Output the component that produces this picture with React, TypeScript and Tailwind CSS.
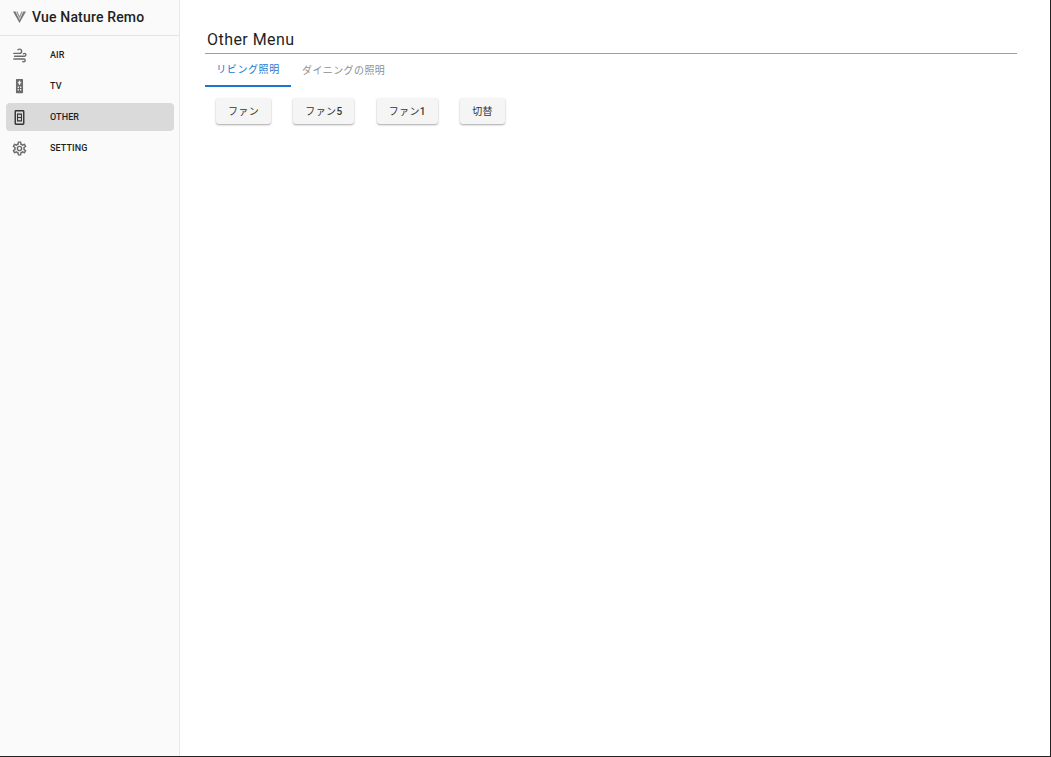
const navItems = [
  { label: "AIR", icon: "air" },
  { label: "TV", icon: "tv" },
  { label: "OTHER", icon: "other", active: true },
  { label: "SETTING", icon: "setting" },
];

const buttons = [
  { label: "ファン", digit: "" },
  { label: "ファン", digit: "5" },
  { label: "ファン", digit: "1" },
  { label: "切替", digit: "" },
];

function NavIcon({ name }: { name: string }) {
  if (name === "air") {
    return (
      <svg viewBox="0 0 24 24" className="h-[17px] w-[17px]" fill="#6b6b6b">
        <path d="M4,10A1,1 0 0,1 3,9A1,1 0 0,1 4,8H12A2,2 0 0,0 14,6A2,2 0 0,0 12,4C11.45,4 10.95,4.22 10.59,4.59C10.2,5 9.56,5 9.17,4.59C8.78,4.2 8.78,3.56 9.17,3.17C9.9,2.45 10.9,2 12,2A4,4 0 0,1 16,6A4,4 0 0,1 12,10H4M19,12A1,1 0 0,0 20,11A1,1 0 0,0 19,10C18.72,10 18.47,10.11 18.29,10.29C17.9,10.68 17.27,10.68 16.88,10.29C16.5,9.9 16.5,9.27 16.88,8.88C17.42,8.34 18.17,8 19,8A3,3 0 0,1 22,11A3,3 0 0,1 19,14H5A1,1 0 0,1 4,13A1,1 0 0,1 5,12H19M18,18H4A1,1 0 0,1 3,17A1,1 0 0,1 4,16H18A3,3 0 0,1 21,19A3,3 0 0,1 18,22C17.17,22 16.42,21.66 15.88,21.12C15.5,20.73 15.5,20.1 15.88,19.71C16.27,19.32 16.9,19.32 17.29,19.71C17.47,19.89 17.72,20 18,20A1,1 0 0,0 19,19A1,1 0 0,0 18,18Z" />
      </svg>
    );
  }
  if (name === "tv") {
    return (
      <svg viewBox="0 0 24 24" className="h-[17px] w-[17px]" fill="#6b6b6b">
        <path
          fillRule="evenodd"
          d="M8,1.5H16A1,1 0 0,1 17,2.5V20.5A1,1 0 0,1 16,21.5H8A1,1 0 0,1 7,20.5V2.5A1,1 0 0,1 8,1.5ZM11,4V6H9.5V7.5H11V9.5H13V7.5H14.5V6H13V4ZM9.5,12V14H11.2V12ZM12.8,12V14H14.5V12ZM9.5,15.5V17.5H11.2V15.5ZM12.8,15.5V17.5H14.5V15.5Z"
        />
      </svg>
    );
  }
  if (name === "other") {
    return (
      <svg viewBox="0 0 24 24" className="h-[17px] w-[17px]" fill="#333333">
        <path
          fillRule="evenodd"
          d="M7,1.5H17A2,2 0 0,1 19,3.5V20.5A2,2 0 0,1 17,22.5H7A2,2 0 0,1 5,20.5V3.5A2,2 0 0,1 7,1.5ZM7,3.5V20.5H17V3.5ZM8.5,6.5H15.5V17.5H8.5ZM10,8V11.2H14V8ZM10,12.8V16H14V12.8Z"
        />
      </svg>
    );
  }
  return (
    <svg viewBox="0 0 24 24" className="h-[17px] w-[17px]" fill="#6b6b6b">
      <path d="M12,8A4,4 0 0,1 16,12A4,4 0 0,1 12,16A4,4 0 0,1 8,12A4,4 0 0,1 12,8M12,10A2,2 0 0,0 10,12A2,2 0 0,0 12,14A2,2 0 0,0 14,12A2,2 0 0,0 12,10M10,22C9.75,22 9.54,21.82 9.5,21.58L9.13,18.93C8.5,18.68 7.96,18.34 7.44,17.94L4.95,18.95C4.73,19.03 4.46,18.95 4.34,18.73L2.34,15.27C2.21,15.05 2.27,14.78 2.46,14.63L4.57,12.97L4.5,12L4.57,11L2.46,9.37C2.27,9.22 2.21,8.95 2.34,8.73L4.34,5.27C4.46,5.05 4.73,4.96 4.95,5.05L7.44,6.05C7.96,5.66 8.5,5.32 9.13,5.07L9.5,2.42C9.54,2.18 9.75,2 10,2H14C14.25,2 14.46,2.18 14.5,2.42L14.87,5.07C15.5,5.32 16.04,5.66 16.56,6.05L19.05,5.05C19.27,4.96 19.54,5.05 19.66,5.27L21.66,8.73C21.79,8.95 21.73,9.22 21.54,9.37L19.43,11L19.5,12L19.43,13L21.54,14.63C21.73,14.78 21.79,15.05 21.66,15.27L19.66,18.73C19.54,18.95 19.27,19.04 19.05,18.95L16.56,17.95C16.04,18.34 15.5,18.68 14.87,18.93L14.5,21.58C14.46,21.82 14.25,22 14,22H10M11.25,4L10.88,6.61C9.68,6.86 8.62,7.5 7.85,8.39L5.44,7.35L4.69,8.65L6.8,10.2C6.4,11.37 6.4,12.64 6.8,13.8L4.68,15.36L5.43,16.66L7.86,15.62C8.63,16.5 9.68,17.14 10.87,17.38L11.24,20H12.76L13.13,17.39C14.32,17.14 15.37,16.5 16.14,15.62L18.57,16.66L19.32,15.36L17.2,13.81C17.6,12.64 17.6,11.37 17.2,10.2L19.31,8.65L18.56,7.35L16.15,8.39C15.38,7.5 14.32,6.86 13.12,6.62L12.75,4H11.25Z" />
    </svg>
  );
}

export default function App() {
  return (
    <div className="box-border flex h-screen w-full overflow-hidden border-r border-b border-[#222222] bg-white font-['Roboto','Noto_Sans_CJK_JP',sans-serif] text-[#1f1f1f]">
      {/* Sidebar */}
      <aside className="flex w-[180px] shrink-0 flex-col border-r border-[#e8e8e8] bg-[#fafafa]">
        <div className="flex h-9 items-center gap-[6px] border-b border-[#e2e2e2] pb-[2px] pl-[13px]">
          <svg viewBox="0 0 13 12" className="h-[12px] w-[13px]">
            <path d="M0,0.5H2.6L6.5,9L10.4,0.5H13L6.5,12Z" fill="#777777" />
            <path d="M3.2,0.5H4.6L6.5,5L8.4,0.5H9.8L6.5,8Z" fill="#999999" />
          </svg>
          <span className="text-[14px] font-medium leading-none tracking-[0.17px]">Vue Nature Remo</span>
        </div>
        <nav className="flex flex-col gap-[3px] pt-[5px] pr-[5px] pl-[6px]">
          {navItems.map((item) => (
            <div
              key={item.label}
              className={`flex h-[28px] items-center rounded-[4px] ${item.active ? "bg-[#dadada]" : ""}`}
            >
              <span className="flex w-[44px] shrink-0 pl-[5px]">
                <NavIcon name={item.icon} />
              </span>
              <span className="text-[9px] font-medium leading-none tracking-[0.1px]">{item.label}</span>
            </div>
          ))}
        </nav>
      </aside>

      {/* Main */}
      <main className="flex-1 pt-[26px] pr-[33px] pl-[25px]">
        <h1 className="h-[28px] border-b border-[#6cc36c] pl-[2px] text-[16px] leading-[27px] font-normal tracking-[0.45px]">
          Other Menu
        </h1>
        <div className="flex h-[33px]">
          <div className="flex w-[86px] items-center justify-center border-b-2 border-[#1976d2] text-[10px] tracking-[0.6px] text-[#1976d2]">
            リビング照明
          </div>
          <div className="flex items-center px-[11px] text-[10px] tracking-[0.4px] text-[#8f8f8f]">
            ダイニングの照明
          </div>
        </div>
        <div className="flex gap-[22.3px] pt-[11px] pl-[11px]">
          {buttons.map((b) => (
            <button
              key={b.label + b.digit}
              className="flex h-[26px] items-center rounded-[3px] bg-[#f5f5f5] px-[12px] text-[10px] font-normal tracking-[0.35px] text-[#333333] shadow-[0_1px_2px_rgba(0,0,0,0.35)]"
            >
              {b.label}
              {b.digit && <span className="font-medium">{b.digit}</span>}
            </button>
          ))}
        </div>
      </main>
    </div>
  );
}
